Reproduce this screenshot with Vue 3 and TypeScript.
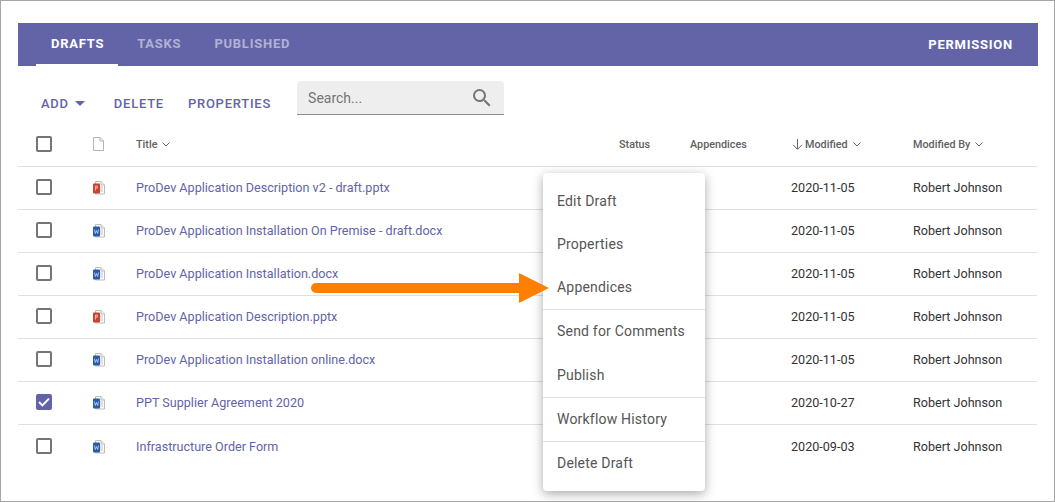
<script setup lang="ts">
interface DraftRow {
  title: string
  kind: 'ppt' | 'word'
  modified: string
  checked?: boolean
}

const rows: DraftRow[] = [
  { title: 'ProDev Application Description v2 - draft.pptx', kind: 'ppt', modified: '2020-11-05' },
  { title: 'ProDev Application Installation On Premise - draft.docx', kind: 'word', modified: '2020-11-05' },
  { title: 'ProDev Application Installation.docx', kind: 'word', modified: '2020-11-05' },
  { title: 'ProDev Application Description.pptx', kind: 'ppt', modified: '2020-11-05' },
  { title: 'ProDev Application Installation online.docx', kind: 'word', modified: '2020-11-05' },
  { title: 'PPT Supplier Agreement 2020', kind: 'word', modified: '2020-10-27', checked: true },
  { title: 'Infrastructure Order Form', kind: 'word', modified: '2020-09-03' },
]

const menuGroups: string[][] = [
  ['Edit Draft', 'Properties', 'Appendices'],
  ['Send for Comments', 'Publish'],
  ['Workflow History'],
  ['Delete Draft'],
]
</script>

<template>
  <div class="page">
    <div class="card">
      <header class="tabbar">
        <nav class="tabs">
          <a class="tab active">Drafts</a>
          <a class="tab">Tasks</a>
          <a class="tab">Published</a>
        </nav>
        <a class="permission">Permission</a>
      </header>

      <div class="toolbar">
        <button class="action add">
          Add
          <svg class="caret" width="10" height="5" viewBox="0 0 10 5"><path d="M0 0h10L5 5z" fill="#6364a8" /></svg>
        </button>
        <button class="action delete">Delete</button>
        <button class="action">Properties</button>
        <div class="search">
          <span class="placeholder">Search...</span>
          <svg class="search-icon" width="24" height="24" viewBox="0 0 24 24">
            <path
              fill="#757575"
              d="M15.5 14h-.79l-.28-.27A6.47 6.47 0 0 0 16 9.5 6.5 6.5 0 1 0 9.5 16c1.61 0 3.09-.59 4.23-1.57l.27.28v.79l5 4.99L20.49 19l-4.99-5zm-6 0C7.01 14 5 11.99 5 9.5S7.01 5 9.5 5 14 7.01 14 9.5 11.99 14 9.5 14z"
            />
          </svg>
        </div>
      </div>

      <div class="row head">
        <div><span class="box"></span></div>
        <div>
          <svg class="page-icon" width="11" height="14" viewBox="0 0 11 14">
            <path d="M.5 .5h6.500l3.500 3.500v9.500h-10z" fill="#fff" stroke="#b5b5b5" />
            <path d="M7 .5v3.500h3.500" fill="none" stroke="#b5b5b5" />
          </svg>
        </div>
        <div class="th">Title <svg class="chev" width="8" height="5" viewBox="0 0 8 5"><path d="M.5.5 4 4 7.5.5" fill="none" stroke="#666" /></svg></div>
        <div class="th">Status</div>
        <div class="th">Appendices</div>
        <div class="th">
          <svg class="down" width="11" height="11" viewBox="0 0 11 11"><path d="M5.5 0v10M1 5.800l4.500 4.500L10 5.800" fill="none" stroke="#666" /></svg>Modified
          <svg class="chev" width="8" height="5" viewBox="0 0 8 5"><path d="M.5.5 4 4 7.5.5" fill="none" stroke="#666" /></svg>
        </div>
        <div class="th">Modified By <svg class="chev" width="8" height="5" viewBox="0 0 8 5"><path d="M.5.5 4 4 7.5.5" fill="none" stroke="#666" /></svg></div>
      </div>

      <div v-for="row in rows" :key="row.title" class="row item">
        <div>
          <span class="box" :class="{ checked: row.checked }">
            <svg v-if="row.checked" width="12" height="10" viewBox="0 0 12 10"><path d="M1 5l3.400 3.400L11 1.600" fill="none" stroke="#fff" stroke-width="2" /></svg>
          </span>
        </div>
        <div>
          <svg class="file" width="14" height="15" viewBox="0 0 14 15">
            <path d="M3.500 1.500h5.500l3.500 3.500v9h-9z" fill="#fafafa" stroke="#bdbdbd" />
            <path d="M9 1.500v3.500h3.500" fill="#eee" stroke="#bdbdbd" />
            <path d="M8 7h3M8 9h3M8 11h3" stroke="#c9c9c9" />
            <rect x="1" y="3.500" width="7" height="10" rx="1" :fill="row.kind === 'ppt' ? '#c8452d' : '#2b5ba8'" />
            <path v-if="row.kind === 'ppt'" d="M3.500 10.500v-4.500h1.800v2.200h-1.800" fill="none" stroke="#eeb7a8" stroke-width="1" />
            <path v-else d="M2.500 6.500l.8 4 1.200-3 1.200 3 .8-4" fill="none" stroke="#c9d9f0" stroke-width=".8" />
          </svg>
        </div>
        <div class="link">{{ row.title }}</div>
        <div></div>
        <div></div>
        <div class="cell">{{ row.modified }}</div>
        <div class="cell">Robert Johnson</div>
      </div>

      <ul class="menu">
        <li v-for="(group, i) in menuGroups" :key="i" class="menu-group">
          <div v-for="label in group" :key="label" class="menu-item">{{ label }}</div>
        </li>
      </ul>

      <svg class="pointer" width="240" height="32" viewBox="0 0 240 32">
        <path d="M5 10h203V0l30 15-30 15V20H5a5 5 0 0 1 0-10z" fill="#ff8000" />
      </svg>
    </div>
  </div>
</template>

<style>
html,
body {
  margin: 0;
  background: #fff;
}
</style>

<style scoped>
.page {
  box-sizing: border-box;
  width: 1055px;
  height: 502px;
  padding: 22px 16px 0 17px;
  border: 1px solid #a6a6a6;
  font-family: Roboto, "Liberation Sans", sans-serif;
  overflow: hidden;
}

.card {
  position: relative;
  width: 1020px;
}

.tabbar {
  display: flex;
  justify-content: space-between;
  align-items: center;
  height: 43px;
  background: #6364a8;
  padding-left: 18px;
  padding-right: 25px;
  font-size: 13px;
  font-weight: 700;
  letter-spacing: 0.75px;
  text-transform: uppercase;
}

.tabs {
  display: flex;
  align-self: stretch;
}

.tab {
  display: flex;
  align-items: center;
  padding: 0 14px 0 15px;
  margin-right: 3px;
  color: rgba(255, 255, 255, 0.5);
  border-bottom: 2px solid transparent;
  box-sizing: border-box;
}

.tab + .tab {
  margin-right: 2px;
  margin-left: 1px;
  padding: 0 15px;
}

.tab.active {
  color: #fff;
  border-bottom-color: #fff;
}

.permission {
  color: #fff;
}

.toolbar {
  display: flex;
  align-items: flex-start;
  height: 56px;
  padding-left: 23px;
}

.action {
  display: flex;
  align-items: center;
  height: 15px;
  margin-top: 30px;
  padding: 0;
  border: none;
  background: none;
  color: #6364a8;
  font: 500 13px Roboto, "Liberation Sans", sans-serif;
  letter-spacing: 0.75px;
  text-transform: uppercase;
}

.add {
  margin-right: 29px;
}

.caret {
  margin-left: 6px;
}

.delete {
  margin-right: 24px;
}

.search {
  display: flex;
  align-items: center;
  justify-content: space-between;
  box-sizing: border-box;
  width: 207px;
  height: 34px;
  margin: 15px 0 0 26px;
  padding: 0 10px 0 11px;
  background: #eee;
  border-bottom: 1px solid #8c8c8c;
  border-radius: 4px 4px 0 0;
}

.placeholder {
  font-size: 14px;
  color: #757575;
}

.row {
  display: grid;
  grid-template-columns: 74px 44px 483px 71px 101px 122px 1fr;
  align-items: center;
  width: 1019px;
  height: 43px;
  border-bottom: 1px solid #e0e0e0;
}

.row.head {
  height: 44px;
}

.row.item {
  height: 40px;
  padding-bottom: 2px;
}

.row.item:last-of-type {
  border-bottom: none;
  height: 42px;
}

.row > div:first-child {
  padding-left: 18px;
}

.row > div {
  display: flex;
  align-items: center;
}

.box {
  box-sizing: border-box;
  display: flex;
  align-items: center;
  justify-content: center;
  width: 16px;
  height: 16px;
  border: 2px solid #757575;
  border-radius: 2px;
}

.box.checked {
  background: #6364a8;
  border-color: #6364a8;
}

.th {
  font-size: 10.8px;
  font-weight: 500;
  color: #616161;
}

.page-icon {
  margin-left: 1px;
}

.chev {
  margin-left: 5px;
}

.down {
  margin: 0 2px 0 1px;
}

.link {
  font-size: 12.6px;
  color: #6364a8;
}

.cell {
  font-size: 12.6px;
  color: #333;
}

.menu {
  position: absolute;
  left: 525px;
  top: 150px;
  width: 162px;
  height: 318px;
  box-sizing: border-box;
  margin: 0;
  padding: 6px 0 0;
  list-style: none;
  background: #fff;
  border-radius: 4px;
  box-shadow: 0 3px 11px rgba(0, 0, 0, 0.34);
}

.menu-group {
  border-bottom: 1px solid #e0e0e0;
}

.menu-group:last-child {
  border-bottom: none;
}

.menu-item {
  display: flex;
  align-items: center;
  height: 43px;
  padding-left: 14px;
  font-size: 14px;
  color: #555;
  letter-spacing: 0.2px;
}

.menu-group:first-child .menu-item {
  height: 43.34px;
}

.menu-group:nth-child(2) .menu-item:last-child {
  height: 44px;
}

.pointer {
  position: absolute;
  left: 293px;
  top: 250px;
}
</style>
